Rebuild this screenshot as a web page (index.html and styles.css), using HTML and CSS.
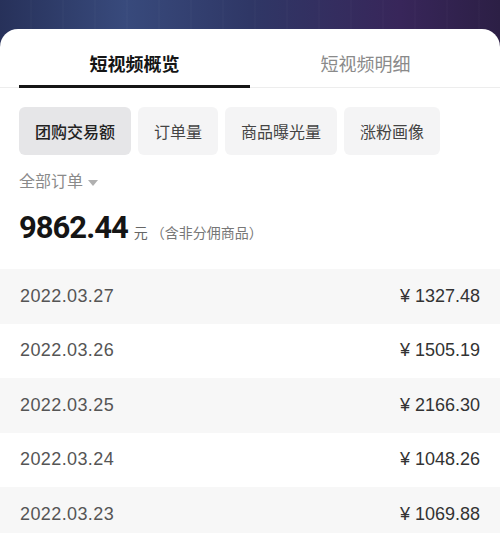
FILE: index.html
```html
<!DOCTYPE html>
<html lang="zh-CN">
<head>
    <meta charset="UTF-8">
    <meta name="viewport" content="width=device-width, initial-scale=1.0">
    <title>短视频概览</title>
    <link rel="stylesheet" href="styles.css">
</head>
<body>
    <div class="backdrop"></div>
    <div class="card">
        <div class="tabs">
            <div class="tab active">短视频概览</div>
            <div class="tab">短视频明细</div>
        </div>

        <div class="chips">
            <div class="chip selected">团购交易额</div>
            <div class="chip">订单量</div>
            <div class="chip">商品曝光量</div>
            <div class="chip">涨粉画像</div>
        </div>

        <div class="filter">全部订单 <span class="caret"></span></div>

        <div class="total">
            <span class="total-num">9862.44</span>
            <span class="total-unit">元</span>
            <span class="total-note">（含非分佣商品）</span>
        </div>

        <div class="rows">
            <div class="row">
                <span class="date">2022.03.27</span>
                <span class="amount">¥ 1327.48</span>
            </div>
            <div class="row">
                <span class="date">2022.03.26</span>
                <span class="amount">¥ 1505.19</span>
            </div>
            <div class="row">
                <span class="date">2022.03.25</span>
                <span class="amount">¥ 2166.30</span>
            </div>
            <div class="row">
                <span class="date">2022.03.24</span>
                <span class="amount">¥ 1048.26</span>
            </div>
            <div class="row">
                <span class="date">2022.03.23</span>
                <span class="amount">¥ 1069.88</span>
            </div>
        </div>
    </div>
</body>
</html>
```

FILE: styles.css
```css
body {
    margin: 0;
    padding: 0;
    font-family: 'Liberation Sans', 'Noto Sans CJK SC', sans-serif;
    background: #fff;
    color: #333;
    overflow: hidden;
}
.backdrop {
    height: 60px;
    background:
        repeating-linear-gradient(to right, rgba(255,255,255,0) 0, rgba(255,255,255,0) 30px, rgba(255,255,255,0.03) 31px, rgba(255,255,255,0) 32px),
        linear-gradient(to right, #27315a 0%, #384a7c 25%, #2f3766 50%, #38265a 80%, #2c1f45 100%);
}
.card {
    margin-top: -31px;
    background: #fff;
    border-radius: 18px 18px 0 0;
    position: relative;
}
.tabs {
    display: flex;
    padding: 0 19px;
    border-bottom: 1px solid #ededed;
}
.tab {
    flex: 1;
    text-align: center;
    font-family: 'Noto Sans CJK SC', sans-serif;
    font-size: 18px;
    line-height: 24px;
    padding: 22px 0 10px;
    color: #8a8a8a;
    border-bottom: 3px solid transparent;
    margin-bottom: -1px;
}
.tab.active {
    color: #151515;
    font-weight: bold;
    border-bottom-color: #151515;
}
.chips {
    display: flex;
    gap: 7px;
    padding: 19px 19px 0;
}
.chip {
    height: 48px;
    line-height: 48px;
    padding: 0 16px;
    border-radius: 6px;
    background: #f4f4f5;
    font-family: 'Noto Sans CJK SC', sans-serif;
    font-size: 16px;
    color: #444;
}
.chip.selected {
    background: #e6e6e8;
    color: #222;
    font-weight: 500;
}
.filter {
    margin: 14px 19px 0;
    font-family: 'Noto Sans CJK SC', sans-serif;
    font-size: 16px;
    line-height: 22px;
    color: #8a8a8a;
}
.caret {
    display: inline-block;
    width: 0;
    height: 0;
    border-left: 5px solid transparent;
    border-right: 5px solid transparent;
    border-top: 6px solid #b0b0b0;
    vertical-align: middle;
    margin-left: 1px;
}
.total {
    margin: 17px 19px 21px;
    height: 40px;
    display: flex;
    align-items: baseline;
}
.total-num {
    font-family: 'Roboto', sans-serif;
    font-size: 31px;
    line-height: 40px;
    font-weight: bold;
    letter-spacing: -1px;
    color: #151515;
}
.total-unit {
    font-family: 'Noto Sans CJK SC', sans-serif;
    font-size: 14px;
    color: #666;
    margin-left: 6px;
}
.total-note {
    font-family: 'Noto Sans CJK SC', sans-serif;
    font-size: 14px;
    color: #777;
    margin-left: 3px;
}
.row {
    height: 54.5px;
    display: flex;
    align-items: center;
    justify-content: space-between;
    padding: 0 20px;
    font-size: 18px;
}
.row:nth-child(odd) {
    background: #f7f7f7;
}
.date {
    color: #555;
    letter-spacing: 0.4px;
}
.amount {
    color: #333;
}
```
